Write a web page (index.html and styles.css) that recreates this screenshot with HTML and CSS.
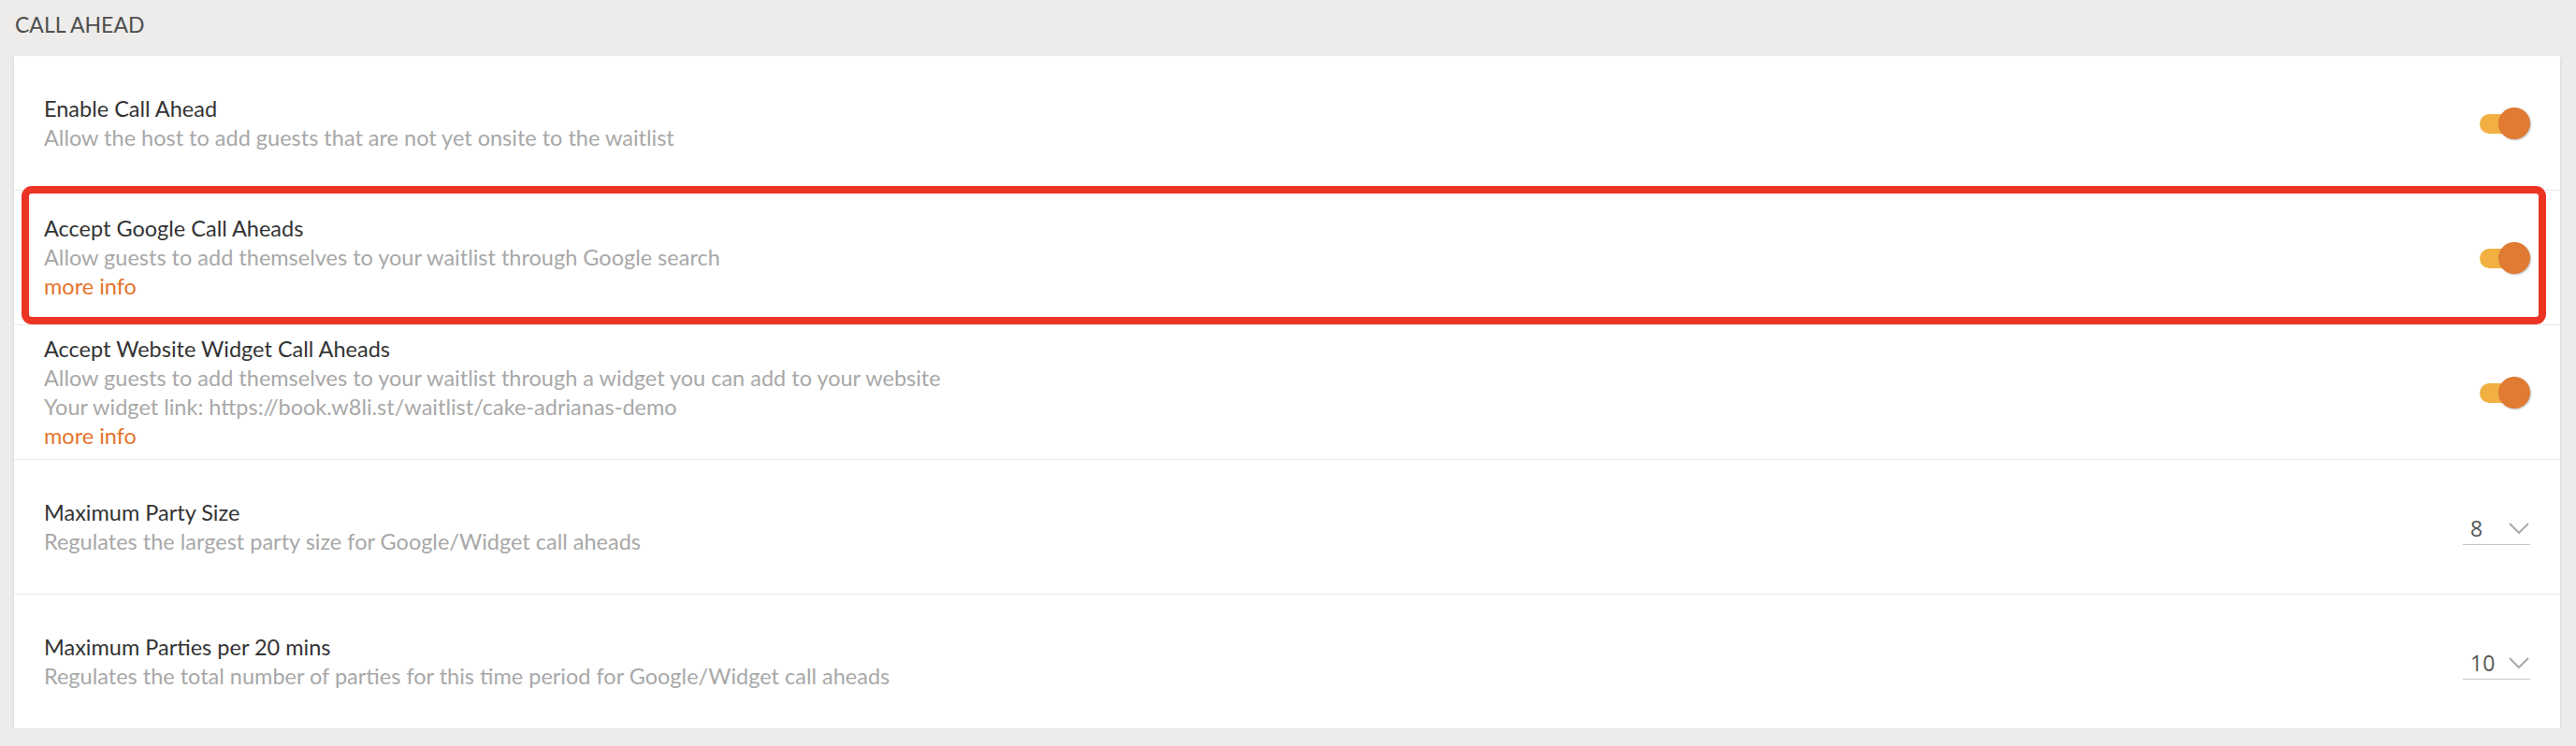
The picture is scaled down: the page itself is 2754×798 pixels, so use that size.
FILE: index.html
```html
<!DOCTYPE html>
<html>
<head>
    <meta charset="UTF-8">
    <title>Call Ahead Settings</title>
    <link rel="stylesheet" href="styles.css">
</head>
<body>
    <h2 class="section-title">CALL AHEAD</h2>

    <div class="card">
        <div class="row">
            <div class="row-text">
                <div class="row-title">Enable Call Ahead</div>
                <div class="row-desc">Allow the host to add guests that are not yet onsite to the waitlist</div>
            </div>
            <div class="toggle on"><span class="knob"></span></div>
        </div>

        <div class="row">
            <div class="row-text">
                <div class="row-title">Accept Google Call Aheads</div>
                <div class="row-desc">Allow guests to add themselves to your waitlist through Google search</div>
                <a class="more-info" href="#">more info</a>
            </div>
            <div class="toggle on"><span class="knob"></span></div>
        </div>

        <div class="row">
            <div class="row-text">
                <div class="row-title">Accept Website Widget Call Aheads</div>
                <div class="row-desc">Allow guests to add themselves to your waitlist through a widget you can add to your website</div>
                <div class="row-desc">Your widget link: https://book.w8li.st/waitlist/cake-adrianas-demo</div>
                <a class="more-info" href="#">more info</a>
            </div>
            <div class="toggle on"><span class="knob"></span></div>
        </div>

        <div class="row">
            <div class="row-text">
                <div class="row-title">Maximum Party Size</div>
                <div class="row-desc">Regulates the largest party size for Google/Widget call aheads</div>
            </div>
            <div class="select">
                <span class="select-value">8</span>
                <svg class="chevron" width="22" height="12" viewBox="0 0 22 12"><path d="M1 1 L11 11 L21 1" fill="none" stroke="#a9a9a9" stroke-width="2"/></svg>
            </div>
        </div>

        <div class="row">
            <div class="row-text">
                <div class="row-title">Maximum Parties per 20 mins</div>
                <div class="row-desc">Regulates the total number of parties for this time period for Google/Widget call aheads</div>
            </div>
            <div class="select">
                <span class="select-value">10</span>
                <svg class="chevron" width="22" height="12" viewBox="0 0 22 12"><path d="M1 1 L11 11 L21 1" fill="none" stroke="#a9a9a9" stroke-width="2"/></svg>
            </div>
        </div>

        <!-- highlight drawn over the Google row -->
        <div class="highlight"></div>
    </div>
</body>
</html>
```

FILE: styles.css
```css
body {
    margin: 0;
    background-color: #edecea;
    font-family: "Lato", "Open Sans", sans-serif;
    font-size: 23.5px;
}

.section-title {
    margin: 0;
    padding: 12px 16px 0 16px;
    height: 48px;
    font-size: 23px;
    font-weight: normal;
    color: #4f4f4f;
}

.card {
    position: relative;
    margin: 0 17px 0 15px;
    background-color: #ffffff;
    box-shadow: 0 2px 3px rgba(0, 0, 0, 0.15);
}

.row {
    display: flex;
    align-items: center;
    justify-content: space-between;
    height: 143px;
    padding: 0 32px;
    border-bottom: 1px solid #e9e9e9;
}

.row:last-of-type {
    border-bottom: none;
}

.row-text {
    line-height: 31px;
}

.row-title {
    color: #333333;
}

.row-desc {
    color: #a8a8a8;
}

.more-info {
    display: block;
    color: #e4742c;
    text-decoration: none;
}

/* toggle switch */
.toggle {
    position: relative;
    width: 54px;
    height: 34px;
}

.toggle::before {
    content: "";
    position: absolute;
    left: 0;
    top: 7px;
    width: 44px;
    height: 21px;
    border-radius: 11px;
    background-color: #f2b042;
}

.toggle .knob {
    position: absolute;
    right: 0;
    top: 0;
    width: 34px;
    height: 34px;
    border-radius: 50%;
    background-color: #e17a32;
    box-shadow: 1px 1px 2px rgba(0, 0, 0, 0.25);
}

/* dropdown */
.select {
    display: flex;
    align-items: center;
    justify-content: space-between;
    width: 72px;
    height: 34px;
    padding: 0 0 0 8px;
    box-sizing: border-box;
    border-bottom: 1px solid #c8c6c0;
    margin-top: 4px;
}

.select-value {
    color: #555555;
    font-family: "Open Sans", sans-serif;
    font-size: 23px;
}

.chevron {
    margin-right: 1px;
}

.highlight {
    position: absolute;
    left: 8px;
    top: 139px;
    width: 2699px;
    height: 148px;
    box-sizing: border-box;
    border: 8px solid #ec3424;
    border-radius: 11px;
    pointer-events: none;
}
```
